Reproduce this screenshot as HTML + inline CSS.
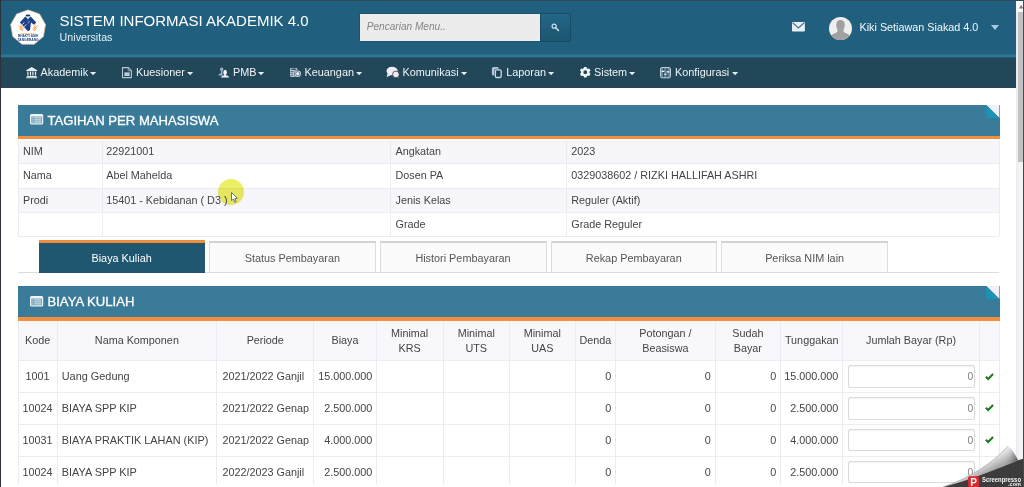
<!DOCTYPE html>
<html><head><meta charset="utf-8"><title>Sistem Informasi Akademik 4.0</title>
<style>
html,body{margin:0;padding:0;}
body{width:1024px;height:487px;overflow:hidden;background:#fff;font-family:"Liberation Sans",Arial,sans-serif;position:relative;color:#444;font-size:10.8px;}
.a{position:absolute;}
.t{position:absolute;white-space:nowrap;line-height:14px;height:14px;}
.c{text-align:center;}
.r{text-align:right;}
.w{color:#fff;}
.vl{position:absolute;width:1px;background:#ecebf1;}
.hl{position:absolute;height:1px;background:#ecebf1;}
.inp{position:absolute;box-sizing:border-box;border:1px solid #dadadd;border-radius:2px;background:#fff;box-shadow:inset 0 1px 1.5px rgba(0,0,0,0.06);}
.tab{position:absolute;box-sizing:border-box;border:1px solid #dcdcde;border-top:2px solid #d3d3d5;background:#fbfbfb;}
svg{position:absolute;overflow:visible;}
</style></head><body>

<div class="a" style="left:0;top:0;width:1016px;height:57.5px;background:linear-gradient(to bottom,#20607e 0,#20607e 53.8px,#2d7797 55.6px,#2d7797 56.6px,#24566d 57.5px);"></div>
<div class="a" style="left:0;top:57.5px;width:1016px;height:30.7px;background:linear-gradient(to bottom,#214759 0,#214759 26px,#26475a 26.6px,#26475a 29.6px,#1f3d4f 30.2px);"></div>
<div class="t w" style="left:59.4px;top:11.5px;font-size:15px;line-height:18px;height:18px;">SISTEM INFORMASI AKADEMIK 4.0</div>
<div class="t" style="left:59.6px;top:30.3px;font-size:10.7px;color:#e3eef3;">Universitas</div>
<svg style="left:0px;top:0px" width="56" height="56" viewBox="0 0 56 56">
<polygon points="28.1,9.9 39.5,14.0 45.5,24.5 43.4,36.5 34.2,44.2 22.0,44.2 12.8,36.5 10.7,24.5 16.7,14.0" fill="#fff" stroke="#f0c9a4" stroke-width="0.7"/>
<path d="M19.9 22.6 L25.3 16.6 L28 18.4 L30.7 16.6 L36.3 22.6 L34 24.8 L31 22.4 L30 30 L28 31.2 Z" fill="#1b3f88"/>
<path d="M26 16.4 L30 16.4 L28 19.6Z" fill="#dfe9f6"/>
<ellipse cx="28" cy="15.5" rx="2.4" ry="0.9" fill="#15396b"/>
<path d="M22.4 24.6 L24.2 22.4 M24.4 26.6 L26.2 24.4" stroke="#fff" stroke-width="0.9"/>
<path d="M28.6 22.6 L29.8 21.4" stroke="#dfe9f6" stroke-width="0.8"/>
<path d="M24.0 30.2 Q21.4 26.4 17.2 24.6 Q19.8 28.4 24.0 30.2Z M23.6 30.6 Q21.5 28.1 18.2 27.4 Q20.3 29.9 23.6 30.6Z M23.4 31.0 Q21.8 29.5 19.6 29.6 Q21.2 31.1 23.4 31.0Z M24.4 29.6 Q22.7 25.8 19.4 23.2 Q21.1 27.0 24.4 29.6Z" fill="#f5ad66"/>
<path d="M32.2 30.2 Q36.4 28.4 39.0 24.6 Q34.8 26.4 32.2 30.2Z M32.6 30.6 Q35.9 29.9 38.0 27.4 Q34.7 28.1 32.6 30.6Z M32.8 31.0 Q35.0 31.1 36.6 29.6 Q34.4 29.5 32.8 31.0Z M31.8 29.6 Q35.1 27.0 36.8 23.2 Q33.5 25.8 31.8 29.6Z" fill="#f5ad66"/>
<path d="M28 19.8 L28 24.4" stroke="#8fa6cf" stroke-width="0.5"/>
<text x="28.1" y="34.1" text-anchor="middle" font-family="Liberation Sans, sans-serif" font-weight="bold" font-size="2.3" fill="#f0a44e">UNIVERSITAS</text>
<text x="28.1" y="37.2" text-anchor="middle" font-family="Liberation Sans, sans-serif" font-weight="bold" font-size="3.15" fill="#22448a">BHAKTI ASIH</text>
<text x="28.1" y="40.7" text-anchor="middle" font-family="Liberation Sans, sans-serif" font-weight="bold" font-size="3.3" fill="#22448a">TANGERANG</text>
</svg>
<div class="a" style="left:359.8px;top:14px;width:180.2px;height:27.2px;background:#ececec;box-shadow:0 0 0 0.6px #1a5069;"></div>
<div class="t" style="left:366.7px;top:19.5px;font-size:10.1px;font-style:italic;color:#858585;">Pencarian Menu..</div>
<div class="a" style="left:540px;top:13.2px;width:30.5px;height:28.6px;background:linear-gradient(#236788,#1c546f);border-radius:0 3px 3px 0;box-shadow:inset 0 0 0 1px #194b64;"></div>
<svg style="left:551px;top:23.4px" width="8.6" height="8.6" viewBox="0 0 11 11"><circle cx="4" cy="4" r="2.6" fill="none" stroke="#c9deea" stroke-width="1.6"/><path d="M6 6 L9.6 9.6" stroke="#c9deea" stroke-width="2" stroke-linecap="round"/></svg>
<svg style="left:791.9px;top:21.5px" width="12.9" height="9.6" viewBox="0 0 13 9.6"><rect x="0" y="0" width="13" height="9.6" rx="0.8" fill="#e9eff3"/><path d="M0.7 0.8 L6.5 6 L12.3 0.8" fill="none" stroke="#3f7c99" stroke-width="1.3"/></svg>
<svg style="left:829.3px;top:16.5px" width="23" height="23" viewBox="0 0 24 24"><defs><clipPath id="av"><circle cx="12" cy="12" r="12"/></clipPath></defs><circle cx="12" cy="12" r="12" fill="#eeeeef"/><g clip-path="url(#av)" fill="#a3a0a1"><ellipse cx="12" cy="8.6" rx="4.5" ry="5.8"/><path d="M0 24 C0.5 18 6 17.4 8.8 15.6 L15.2 15.6 C18 17.4 23.5 18 24 24 Z"/><rect x="8.8" y="11" width="6.4" height="6"/></g></svg>
<div class="t w" style="left:859.5px;top:19.6px;font-size:10.8px;color:#f4f8fa;">Kiki Setiawan Siakad 4.0</div>
<svg style="left:991px;top:24.5px" width="8" height="5" viewBox="0 0 8 5"><path d="M0 0 H8 L4 5Z" fill="#a9cbe2"/></svg>
<svg style="left:26px;top:67.4px" width="11" height="11" viewBox="0 0 11 11"><path d="M0.2 3.3 L5.7 0 L11.2 3.3 V4 H0.2Z M1.3 4.6 H2.5 V8.6 H1.3Z M3.9 4.6 H5.1 V8.6 H3.9Z M6.3 4.6 H7.5 V8.6 H6.3Z M8.9 4.6 H10.1 V8.6 H8.9Z M0.8 9 H10.6 V9.9 H0.8Z M0.2 10.3 H11.2 V11.2 H0.2Z" fill="#e8eef1"/></svg>
<div class="t" style="left:40.5px;top:65px;font-size:10.85px;color:#eef3f5;">Akademik</div>
<svg style="left:90.2px;top:71.6px" width="6.2" height="3.3" viewBox="0 0 6.4 3.4"><path d="M0 0 H6.4 L3.2 3.4Z" fill="#e4ecef"/></svg>
<svg style="left:121px;top:67.4px" width="11" height="11" viewBox="0 0 11 11"><path d="M1.5 0.6 H7.4 L10.4 3.6 V10.6 H1.5Z" fill="none" stroke="#b6c6d4" stroke-width="1.1" stroke-linejoin="round"/><path d="M7.2 0.8 V3.8 H10.2" fill="none" stroke="#b6c6d4" stroke-width="0.7"/><rect x="3.4" y="5.4" width="5.2" height="3.6" fill="#c6d3de"/><path d="M3.4 7.2 H8.6" stroke="#8fa5b6" stroke-width="0.5"/></svg>
<div class="t" style="left:136px;top:65px;font-size:10.85px;color:#eef3f5;">Kuesioner</div>
<svg style="left:187.2px;top:71.6px" width="6.2" height="3.3" viewBox="0 0 6.4 3.4"><path d="M0 0 H6.4 L3.2 3.4Z" fill="#e4ecef"/></svg>
<svg style="left:218px;top:67.4px" width="11" height="11" viewBox="0 0 11 11"><g fill="#9db2c6"><circle cx="3.7" cy="2.2" r="1.7"/><path d="M0 8.4 Q1 6.8 2.9 6.2 L2.9 3.4 L4.7 3.4 L4.7 8.4Z"/></g><g fill="#214759"><ellipse cx="7.1" cy="5.2" rx="2.5" ry="3.1"/></g><g fill="#f3f5f7"><ellipse cx="7.1" cy="5.2" rx="1.8" ry="2.5"/><rect x="6.2" y="6.8" width="1.8" height="2"/><path d="M2.8 10.5 Q3.6 8.7 6.2 8.3 L8 8.3 Q10.6 8.7 11.3 10.5Z"/></g></svg>
<div class="t" style="left:233px;top:65px;font-size:10.85px;color:#eef3f5;">PMB</div>
<svg style="left:258.2px;top:71.6px" width="6.2" height="3.3" viewBox="0 0 6.4 3.4"><path d="M0 0 H6.4 L3.2 3.4Z" fill="#e4ecef"/></svg>
<svg style="left:289.5px;top:67.4px" width="11" height="11" viewBox="0 0 11 11"><rect x="0" y="1" width="7.4" height="8.9" rx="1.3" fill="#b7c7d4"/><ellipse cx="3.7" cy="2.3" rx="2.7" ry="0.75" fill="#214759"/><path d="M0.5 4.5 H3.4 M0.5 6.4 H3 M0.5 8.3 H3.2" stroke="#214759" stroke-width="0.6"/><circle cx="7.7" cy="6.7" r="3.7" fill="#214759"/><circle cx="7.7" cy="6.7" r="3.2" fill="#dbe4ec"/><circle cx="7.7" cy="6.7" r="2.1" fill="none" stroke="#214759" stroke-width="0.6"/><rect x="7.1" y="5.6" width="1.2" height="2.2" fill="#f4f7f9"/></svg>
<div class="t" style="left:304.5px;top:65px;font-size:10.85px;color:#eef3f5;">Keuangan</div>
<svg style="left:355.7px;top:71.6px" width="6.2" height="3.3" viewBox="0 0 6.4 3.4"><path d="M0 0 H6.4 L3.2 3.4Z" fill="#e4ecef"/></svg>
<svg style="left:386.25px;top:67.4px" width="11" height="11" viewBox="0 0 11 11"><ellipse cx="6.1" cy="4" rx="5.6" ry="4.2" fill="#f0eef4"/><path d="M1.6 6.2 L0.6 10.3 L5.4 7.8Z" fill="#f0eef4"/><path d="M11 9.4 L13 10.8 L12.6 7.8Z" fill="#f3eaf0"/><circle cx="9.9" cy="7.4" r="3.3" fill="#f3eaf0" stroke="#2a3f50" stroke-width="0.8"/></svg>
<div class="t" style="left:402.5px;top:65px;font-size:10.85px;color:#eef3f5;">Komunikasi</div>
<svg style="left:461.0px;top:71.6px" width="6.2" height="3.3" viewBox="0 0 6.4 3.4"><path d="M0 0 H6.4 L3.2 3.4Z" fill="#e4ecef"/></svg>
<svg style="left:491.25px;top:67.4px" width="11" height="11" viewBox="0 0 11 11"><rect x="0.9" y="0" width="7" height="8.6" rx="1.6" fill="#b3c5d5"/><rect x="3.3" y="1.7" width="8" height="9.9" rx="2" fill="#214759"/><rect x="4.4" y="2.8" width="5.8" height="7.7" rx="1.3" fill="#1d4254" stroke="#cbd8e3" stroke-width="1.3"/></svg>
<div class="t" style="left:506.25px;top:65px;font-size:10.85px;color:#eef3f5;">Laporan</div>
<svg style="left:548.2px;top:71.6px" width="6.2" height="3.3" viewBox="0 0 6.4 3.4"><path d="M0 0 H6.4 L3.2 3.4Z" fill="#e4ecef"/></svg>
<svg style="left:579.5px;top:67.4px" width="11" height="11" viewBox="0 0 11 11"><g fill="#f4f7f8"><rect x="3.85" y="-0.1" width="2.8" height="3" rx="0.5" transform="rotate(0 5.25 5.25)"/><rect x="3.85" y="-0.1" width="2.8" height="3" rx="0.5" transform="rotate(60 5.25 5.25)"/><rect x="3.85" y="-0.1" width="2.8" height="3" rx="0.5" transform="rotate(120 5.25 5.25)"/><rect x="3.85" y="-0.1" width="2.8" height="3" rx="0.5" transform="rotate(180 5.25 5.25)"/><rect x="3.85" y="-0.1" width="2.8" height="3" rx="0.5" transform="rotate(240 5.25 5.25)"/><rect x="3.85" y="-0.1" width="2.8" height="3" rx="0.5" transform="rotate(300 5.25 5.25)"/></g><circle cx="5.25" cy="5.25" r="3.1" fill="none" stroke="#f4f7f8" stroke-width="2.3"/></svg>
<div class="t" style="left:594px;top:65px;font-size:10.85px;color:#eef3f5;">Sistem</div>
<svg style="left:628.7px;top:71.6px" width="6.2" height="3.3" viewBox="0 0 6.4 3.4"><path d="M0 0 H6.4 L3.2 3.4Z" fill="#e4ecef"/></svg>
<svg style="left:660px;top:67.4px" width="11" height="11" viewBox="0 0 11 11"><rect x="0.6" y="0.6" width="9.8" height="10.2" rx="1.2" fill="#5f8198" stroke="#c8d8e4" stroke-width="1"/><path d="M3.6 1.2 V10.2 M7 1.2 V10.2" stroke="#2b4f63" stroke-width="1"/><path d="M1.6 4.4 H4.4 M4.4 7.4 H6.4 M6.6 4.8 H9.4" stroke="#f2f6f8" stroke-width="1.3"/></svg>
<div class="t" style="left:675px;top:65px;font-size:10.85px;color:#eef3f5;">Konfigurasi</div>
<svg style="left:731.95px;top:71.6px" width="6.2" height="3.3" viewBox="0 0 6.4 3.4"><path d="M0 0 H6.4 L3.2 3.4Z" fill="#e4ecef"/></svg>
<div class="a" style="left:18px;top:104.5px;width:981.5px;height:32px;background:#3a7b9a;"></div>
<div class="a" style="left:18px;top:135.7px;width:981.5px;height:3.8px;background:#f28e3c;"></div>
<svg style="left:985.7px;top:104.5px" width="13.8" height="13" viewBox="0 0 14 14"><path d="M0 0 H14 V14Z" fill="#f1f0f8"/><path d="M0 0 L14 14 H0Z" fill="#1b93b7"/></svg>
<svg style="left:30.2px;top:114.4px" width="13.2" height="10.6" viewBox="0 0 13.2 10.6"><rect x="0" y="0" width="13.2" height="10.6" rx="1.5" fill="#eef4f7"/><rect x="1.3" y="2.5" width="10.6" height="6.8" fill="#6f9fb8"/><path d="M2.3 3.9 H3.3 M4.2 3.9 H11 M2.3 5.9 H3.3 M4.2 5.9 H11 M2.3 7.9 H3.3 M4.2 7.9 H11" stroke="#e3edf2" stroke-width="1"/></svg>
<div class="t w" style="left:47.5px;top:111.5px;font-size:13.1px;line-height:18px;height:18px;-webkit-text-stroke:0.3px #fff;">TAGIHAN PER MAHASISWA</div>
<div class="a" style="left:18px;top:139.5px;width:981px;height:24.25px;background:#f7f6fa;"></div>
<div class="a" style="left:18px;top:163.75px;width:981px;height:24.25px;background:#ffffff;"></div>
<div class="a" style="left:18px;top:188px;width:981px;height:24px;background:#f7f6fa;"></div>
<div class="a" style="left:18px;top:212px;width:981px;height:24px;background:#ffffff;"></div>
<div class="hl" style="left:18px;top:163.25px;width:981px;"></div>
<div class="hl" style="left:18px;top:187.5px;width:981px;"></div>
<div class="hl" style="left:18px;top:211.5px;width:981px;"></div>
<div class="hl" style="left:18px;top:235.5px;width:981px;"></div>
<div class="vl" style="left:17.8px;top:139.5px;height:96.5px;"></div>
<div class="vl" style="left:101.5px;top:139.5px;height:96.5px;"></div>
<div class="vl" style="left:390.0px;top:139.5px;height:96.5px;"></div>
<div class="vl" style="left:565.5px;top:139.5px;height:96.5px;"></div>
<div class="vl" style="left:998.5px;top:139.5px;height:96.5px;"></div>
<div class="a" style="left:217.6px;top:179.3px;width:26.2px;height:26.2px;border-radius:50%;background:#ecee64;mix-blend-mode:multiply;filter:blur(0.7px);"></div>
<div class="t" style="left:23px;top:144.225px;">NIM</div>
<div class="t" style="left:106.25px;top:144.225px;">22921001</div>
<div class="t" style="left:395.5px;top:144.225px;">Angkatan</div>
<div class="t" style="left:571.25px;top:144.225px;">2023</div>
<div class="t" style="left:23px;top:168.475px;">Nama</div>
<div class="t" style="left:106.25px;top:168.475px;">Abel Mahelda</div>
<div class="t" style="left:395.5px;top:168.475px;">Dosen PA</div>
<div class="t" style="left:571.25px;top:168.475px;">0329038602 / RIZKI HALLIFAH ASHRI</div>
<div class="t" style="left:23px;top:192.6px;">Prodi</div>
<div class="t" style="left:106.25px;top:192.6px;">15401 - Kebidanan ( D3 )</div>
<div class="t" style="left:395.5px;top:192.6px;">Jenis Kelas</div>
<div class="t" style="left:571.25px;top:192.6px;">Reguler (Aktif)</div>
<div class="t" style="left:395.5px;top:216.6px;">Grade</div>
<div class="t" style="left:571.25px;top:216.6px;">Grade Reguler</div>
<svg style="left:230.6px;top:191.8px" width="8" height="11" viewBox="0 0 8 11"><path d="M0.5 0.5 V8.6 L2.4 7 L3.8 10.2 L5.2 9.6 L3.8 6.6 L6.4 6.4Z" fill="#fff" stroke="#555" stroke-width="0.8"/></svg>
<div class="hl" style="left:18px;top:272.2px;width:981px;background:#dcdcde;"></div>
<div class="a" style="left:38.75px;top:240px;width:165.75px;height:32.6px;background:#1f5670;"></div>
<div class="a" style="left:38.75px;top:240px;width:165.75px;height:3px;background:#f08c3a;"></div>
<div class="t w c" style="left:38.75px;top:251.4px;width:165.75px;font-size:10.85px;">Biaya Kuliah</div>
<div class="tab" style="left:209px;top:240.5px;width:167.15px;height:32px;"></div>
<div class="t c" style="left:209px;top:251px;width:166.75px;color:#555;font-size:10.85px;">Status Pembayaran</div>
<div class="tab" style="left:379.75px;top:240.5px;width:166.9px;height:32px;"></div>
<div class="t c" style="left:379.75px;top:251px;width:166.5px;color:#555;font-size:10.85px;">Histori Pembayaran</div>
<div class="tab" style="left:550.5px;top:240.5px;width:166.9px;height:32px;"></div>
<div class="t c" style="left:550.5px;top:251px;width:166.5px;color:#555;font-size:10.85px;">Rekap Pembayaran</div>
<div class="tab" style="left:721.25px;top:240.5px;width:167.15px;height:32px;"></div>
<div class="t c" style="left:721.25px;top:251px;width:166.75px;color:#555;font-size:10.85px;">Periksa NIM lain</div>
<div class="a" style="left:18px;top:286px;width:981.5px;height:32px;background:#3a7b9a;"></div>
<div class="a" style="left:18px;top:317.2px;width:981.5px;height:3.8px;background:#f28e3c;"></div>
<svg style="left:985.7px;top:286px" width="13.8" height="13" viewBox="0 0 14 14"><path d="M0 0 H14 V14Z" fill="#f1f0f8"/><path d="M0 0 L14 14 H0Z" fill="#1b93b7"/></svg>
<svg style="left:30.2px;top:295.9px" width="13.2" height="10.6" viewBox="0 0 13.2 10.6"><rect x="0" y="0" width="13.2" height="10.6" rx="1.5" fill="#eef4f7"/><rect x="1.3" y="2.5" width="10.6" height="6.8" fill="#6f9fb8"/><path d="M2.3 3.9 H3.3 M4.2 3.9 H11 M2.3 5.9 H3.3 M4.2 5.9 H11 M2.3 7.9 H3.3 M4.2 7.9 H11" stroke="#e3edf2" stroke-width="1"/></svg>
<div class="t w" style="left:47.5px;top:293px;font-size:13.1px;line-height:18px;height:18px;-webkit-text-stroke:0.3px #fff;">BIAYA KULIAH</div>
<div class="a" style="left:18px;top:320.5px;width:981px;height:40px;background:#f8f7fb;"></div>
<div class="hl" style="left:18px;top:360.2px;width:981px;"></div>
<div class="hl" style="left:18px;top:391.9px;width:981px;"></div>
<div class="hl" style="left:18px;top:423.7px;width:981px;"></div>
<div class="hl" style="left:18px;top:455.5px;width:981px;"></div>
<div class="vl" style="left:17.8px;top:320.5px;height:163.5px;"></div>
<div class="vl" style="left:56.5px;top:320.5px;height:163.5px;"></div>
<div class="vl" style="left:216.25px;top:320.5px;height:163.5px;"></div>
<div class="vl" style="left:313.25px;top:320.5px;height:163.5px;"></div>
<div class="vl" style="left:375.75px;top:320.5px;height:163.5px;"></div>
<div class="vl" style="left:442.5px;top:320.5px;height:163.5px;"></div>
<div class="vl" style="left:509.0px;top:320.5px;height:163.5px;"></div>
<div class="vl" style="left:574.5px;top:320.5px;height:163.5px;"></div>
<div class="vl" style="left:615.25px;top:320.5px;height:163.5px;"></div>
<div class="vl" style="left:714.5px;top:320.5px;height:163.5px;"></div>
<div class="vl" style="left:780.25px;top:320.5px;height:163.5px;"></div>
<div class="vl" style="left:842.25px;top:320.5px;height:163.5px;"></div>
<div class="vl" style="left:978.75px;top:320.5px;height:163.5px;"></div>
<div class="vl" style="left:998.5px;top:320.5px;height:163.5px;"></div>
<div class="t c" style="left:18.3px;top:333.35px;width:38.7px;">Kode</div>
<div class="t c" style="left:57px;top:333.35px;width:159.75px;">Nama Komponen</div>
<div class="t c" style="left:216.75px;top:333.35px;width:97.0px;">Periode</div>
<div class="t c" style="left:313.75px;top:333.35px;width:62.5px;">Biaya</div>
<div class="t c" style="left:376.25px;top:325.85px;width:66.75px;">Minimal</div>
<div class="t c" style="left:376.25px;top:340.85px;width:66.75px;">KRS</div>
<div class="t c" style="left:443px;top:325.85px;width:66.5px;">Minimal</div>
<div class="t c" style="left:443px;top:340.85px;width:66.5px;">UTS</div>
<div class="t c" style="left:509.5px;top:325.85px;width:65.5px;">Minimal</div>
<div class="t c" style="left:509.5px;top:340.85px;width:65.5px;">UAS</div>
<div class="t c" style="left:575px;top:333.35px;width:40.75px;">Denda</div>
<div class="t c" style="left:615.75px;top:325.85px;width:99.25px;">Potongan /</div>
<div class="t c" style="left:615.75px;top:340.85px;width:99.25px;">Beasiswa</div>
<div class="t c" style="left:715px;top:325.85px;width:65.75px;">Sudah</div>
<div class="t c" style="left:715px;top:340.85px;width:65.75px;">Bayar</div>
<div class="t c" style="left:780.75px;top:333.35px;width:62.0px;">Tunggakan</div>
<div class="t c" style="left:842.75px;top:333.35px;width:136.5px;">Jumlah Bayar (Rp)</div>
<div class="t c" style="left:18px;top:369.34999999999997px;width:39px;">1001</div>
<div class="t" style="left:61.75px;top:369.34999999999997px;font-size:10.9px;">Uang Gedung</div>
<div class="t" style="left:222.5px;top:369.34999999999997px;">2021/2022 Ganjil</div>
<div class="t r" style="left:313.75px;top:369.34999999999997px;width:58.5px;">15.000.000</div>
<div class="t r" style="left:571.2px;top:369.34999999999997px;width:40px;">0</div>
<div class="t r" style="left:670.7px;top:369.34999999999997px;width:40px;">0</div>
<div class="t r" style="left:736.2px;top:369.34999999999997px;width:40px;">0</div>
<div class="t r" style="left:780.75px;top:369.34999999999997px;width:57.5px;">15.000.000</div>
<div class="inp" style="left:848px;top:365.1499999999999px;width:127px;height:22.8px;"></div>
<div class="t r" style="left:900px;top:370.34999999999997px;width:73.2px;font-size:10.3px;color:#808080;">0</div>
<svg style="left:985.2px;top:372.54999999999995px" width="8.8" height="7" viewBox="0 0 9.6 7.6"><path d="M0.9 4 L3.5 6.5 L8.8 1" fill="none" stroke="#1d7a1d" stroke-width="2.2"/></svg>
<div class="t c" style="left:18px;top:401.09999999999997px;width:39px;">10024</div>
<div class="t" style="left:61.75px;top:401.09999999999997px;font-size:10.9px;">BIAYA SPP KIP</div>
<div class="t" style="left:222.5px;top:401.09999999999997px;">2021/2022 Genap</div>
<div class="t r" style="left:313.75px;top:401.09999999999997px;width:58.5px;">2.500.000</div>
<div class="t r" style="left:571.2px;top:401.09999999999997px;width:40px;">0</div>
<div class="t r" style="left:670.7px;top:401.09999999999997px;width:40px;">0</div>
<div class="t r" style="left:736.2px;top:401.09999999999997px;width:40px;">0</div>
<div class="t r" style="left:780.75px;top:401.09999999999997px;width:57.5px;">2.500.000</div>
<div class="inp" style="left:848px;top:396.8999999999999px;width:127px;height:22.8px;"></div>
<div class="t r" style="left:900px;top:402.09999999999997px;width:73.2px;font-size:10.3px;color:#808080;">0</div>
<svg style="left:985.2px;top:404.29999999999995px" width="8.8" height="7" viewBox="0 0 9.6 7.6"><path d="M0.9 4 L3.5 6.5 L8.8 1" fill="none" stroke="#1d7a1d" stroke-width="2.2"/></svg>
<div class="t c" style="left:18px;top:432.90000000000003px;width:39px;">10031</div>
<div class="t" style="left:61.75px;top:432.90000000000003px;font-size:10.9px;">BIAYA PRAKTIK LAHAN (KIP)</div>
<div class="t" style="left:222.5px;top:432.90000000000003px;">2021/2022 Genap</div>
<div class="t r" style="left:313.75px;top:432.90000000000003px;width:58.5px;">4.000.000</div>
<div class="t r" style="left:571.2px;top:432.90000000000003px;width:40px;">0</div>
<div class="t r" style="left:670.7px;top:432.90000000000003px;width:40px;">0</div>
<div class="t r" style="left:736.2px;top:432.90000000000003px;width:40px;">0</div>
<div class="t r" style="left:780.75px;top:432.90000000000003px;width:57.5px;">4.000.000</div>
<div class="inp" style="left:848px;top:428.7px;width:127px;height:22.8px;"></div>
<div class="t r" style="left:900px;top:433.90000000000003px;width:73.2px;font-size:10.3px;color:#808080;">0</div>
<svg style="left:985.2px;top:436.1px" width="8.8" height="7" viewBox="0 0 9.6 7.6"><path d="M0.9 4 L3.5 6.5 L8.8 1" fill="none" stroke="#1d7a1d" stroke-width="2.2"/></svg>
<div class="t c" style="left:18px;top:464.7px;width:39px;">10024</div>
<div class="t" style="left:61.75px;top:464.7px;font-size:10.9px;">BIAYA SPP KIP</div>
<div class="t" style="left:222.5px;top:464.7px;">2022/2023 Ganjil</div>
<div class="t r" style="left:313.75px;top:464.7px;width:58.5px;">2.500.000</div>
<div class="t r" style="left:571.2px;top:464.7px;width:40px;">0</div>
<div class="t r" style="left:670.7px;top:464.7px;width:40px;">0</div>
<div class="t r" style="left:736.2px;top:464.7px;width:40px;">0</div>
<div class="t r" style="left:780.75px;top:464.7px;width:57.5px;">2.500.000</div>
<div class="inp" style="left:848px;top:460.49999999999994px;width:127px;height:22.8px;"></div>
<div class="t r" style="left:900px;top:465.7px;width:73.2px;font-size:10.3px;color:#808080;">0</div>
<svg style="left:985.2px;top:467.9px" width="8.8" height="7" viewBox="0 0 9.6 7.6"><path d="M0.9 4 L3.5 6.5 L8.8 1" fill="none" stroke="#1d7a1d" stroke-width="2.2"/></svg>
<div class="a" style="left:1016px;top:0;width:8px;height:487px;background:linear-gradient(to right,#ebeaee 0,#f1f0f4 2px,#f4f3f6 3px);"></div>
<div class="a" style="left:1016px;top:0;width:8px;height:11.7px;background:#fafafc;"></div>
<div class="a" style="left:1017.9px;top:11.7px;width:5.1px;height:150.5px;background:#c2c1c3;"></div>
<svg style="left:1018.6px;top:5.4px" width="4.4" height="3.6" viewBox="0 0 5 4"><path d="M0 4 L2.5 0 L5 4Z" fill="#777"/></svg>
<svg style="left:934px;top:437px" width="90" height="50" viewBox="0 0 90 50">
<defs><linearGradient id="cg" gradientUnits="userSpaceOnUse" x1="52" y1="20" x2="62" y2="38"><stop offset="0" stop-color="#f6f6f6"/><stop offset="0.35" stop-color="#d4d4d4"/><stop offset="1" stop-color="#7e7e7e"/></linearGradient>
<linearGradient id="cg2" gradientUnits="userSpaceOnUse" x1="72" y1="14" x2="84" y2="20"><stop offset="0" stop-color="#dcdcdc" stop-opacity="0"/><stop offset="1" stop-color="#6a6a6a"/></linearGradient></defs>
<path d="M9 50 L84 23.3 L90 21.5 L90 50Z" fill="#3c3c3c"/>
<path d="M9 50 C 36 41 60 25 74.1 9.1 C 78 12 81.5 18 84 23.3 C 62 33 36 43 9 50Z" fill="url(#cg)"/>
<path d="M9 50 C 36 41 60 25 74.1 9.1" fill="none" stroke="#a9a9a9" stroke-width="0.7"/>
<path d="M66 18 C 69 15 72 12 74.1 9.1 C 78 12 81.5 18 84 23.3 C 78 26 72 28 66 31Z" fill="url(#cg2)"/>
<rect x="34" y="39.3" width="11.2" height="10.7" rx="1.6" fill="#d8282e"/>
<text x="39.6" y="48.6" text-anchor="middle" font-family="Liberation Sans, sans-serif" font-size="10" font-weight="bold" fill="#fff">P</text>
<text x="48" y="45" font-family="Liberation Sans, sans-serif" font-size="6.8" font-weight="bold" fill="#f4f4f4" textLength="39" lengthAdjust="spacingAndGlyphs">Screenpresso</text>
<text x="74" y="49.4" font-family="Liberation Sans, sans-serif" font-size="5.4" font-weight="bold" fill="#f4f4f4" textLength="13" lengthAdjust="spacingAndGlyphs">.com</text>
</svg>
<div class="a" style="left:0;top:0;width:1024px;height:1px;background:#30475a;"></div>
<div class="a" style="left:0;top:0;width:1.15px;height:487px;background:#2c323a;"></div>
<div class="a" style="left:1022.6px;top:0;width:1.4px;height:487px;background:#48484c;"></div>
</body></html>
